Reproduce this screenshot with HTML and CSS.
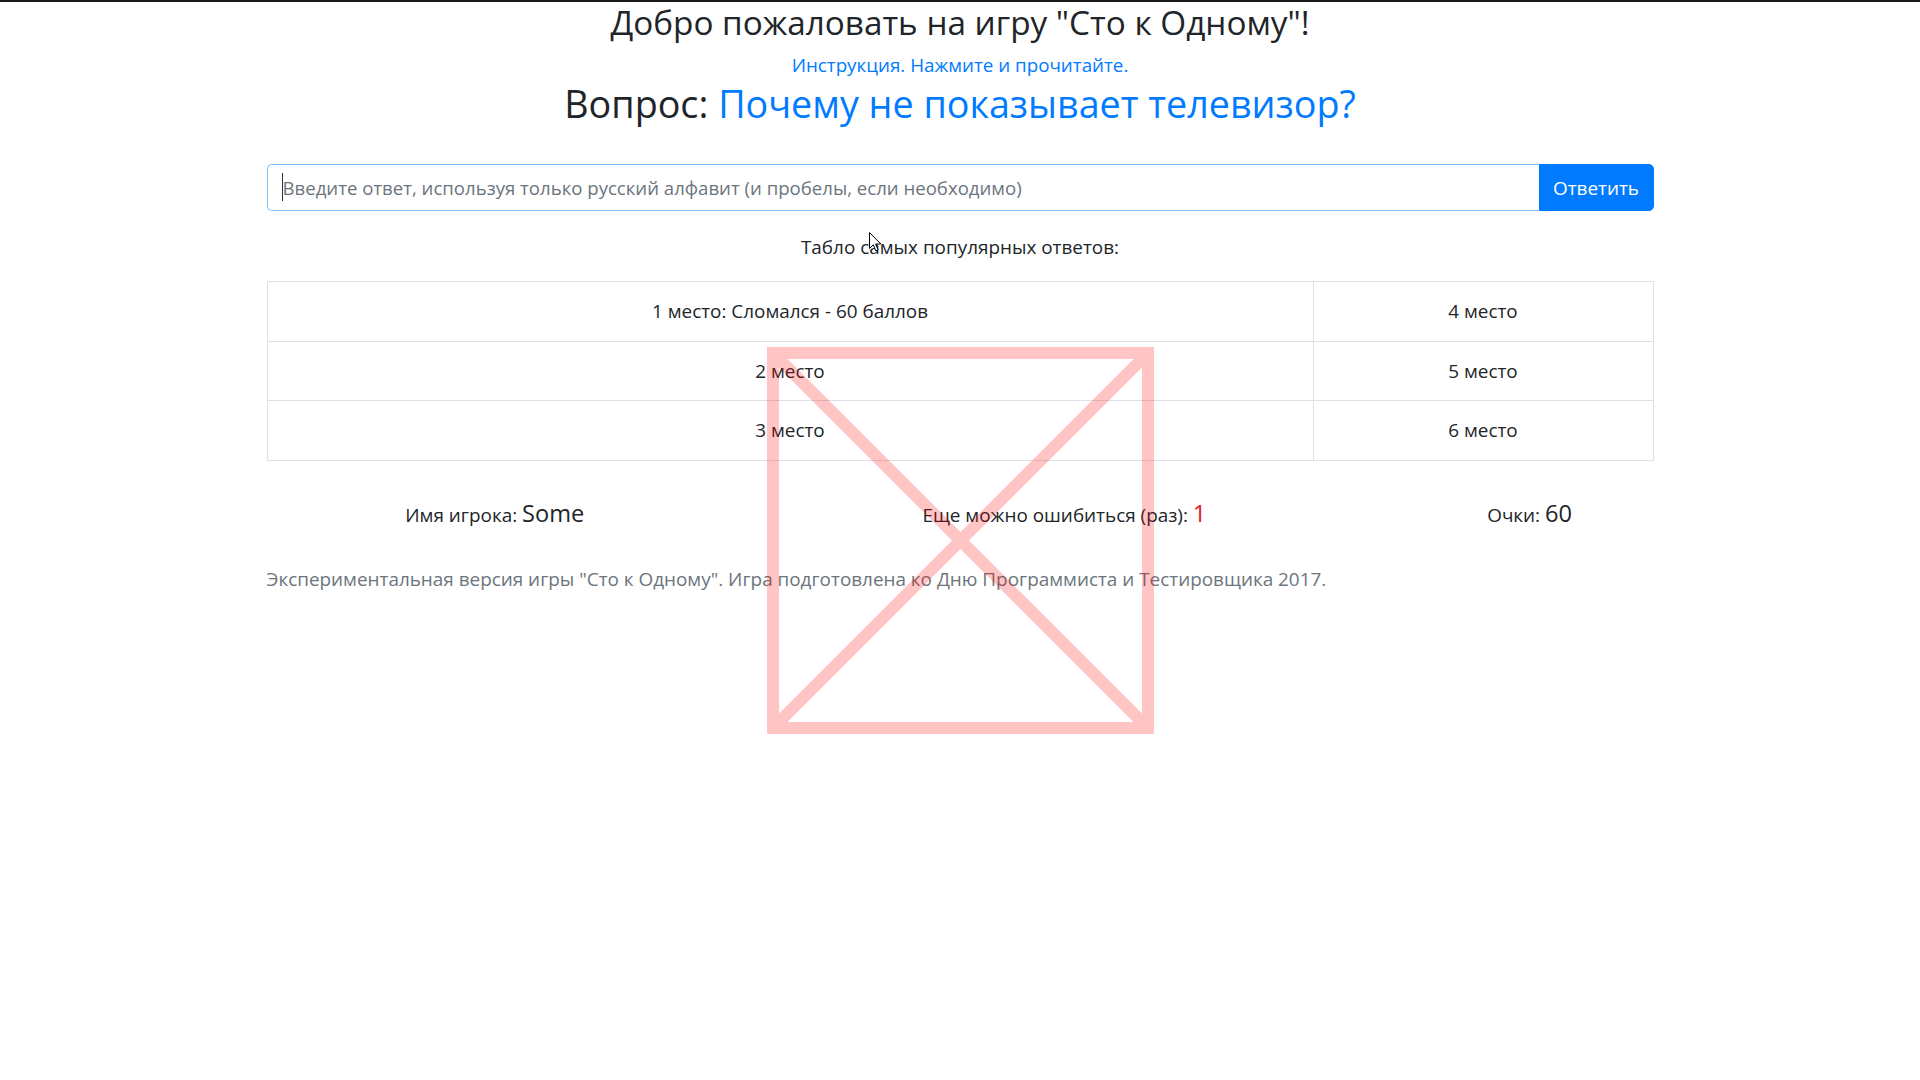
FILE: index.html
```html
<!DOCTYPE html>
<html lang="ru">
<head>
<meta charset="utf-8">
<title>Сто к Одному</title>
<link rel="stylesheet" href="styles.css">
</head>
<body>
<div class="container">
  <h1 class="title">Добро пожаловать на игру "Сто к Одному"!</h1>
  <div class="instr"><a href="#" class="link">Инструкция. Нажмите и прочитайте.</a></div>
  <h2 class="question">Вопрос: <span class="q-text">Почему не показывает телевизор?</span></h2>
  <form class="answer-form">
    <div class="field">
      <input class="answer-input" type="text" placeholder="Введите ответ, используя только русский алфавит (и пробелы, если необходимо)">
      <span class="caret"></span>
    </div>
    <button class="answer-btn" type="button">Ответить</button>
  </form>
  <p class="board-title">Табло самых популярных ответов:<svg class="pointer" width="13" height="21" viewBox="0 0 13 21"><path d="M0.5 0.5 L0.5 16.5 L4.3 12.8 L6.8 18.8 L9.1 17.8 L6.6 12 L11.8 12 Z" fill="#fff" stroke="#000" stroke-width="1" stroke-linejoin="round"/></svg></p>
  <table class="board">
    <colgroup><col class="c1"><col class="c2"></colgroup>
    <tr><td>1 место: Сломался - 60 баллов</td><td>4 место</td></tr>
    <tr><td>2 место</td><td>5 место</td></tr>
    <tr><td>3 место</td><td>6 место</td></tr>
  </table>
  <div class="stats">
    <div class="stat">Имя игрока: <span class="big">Some</span></div>
    <div class="stat">Еще можно ошибиться (раз): <span class="big danger">1</span></div>
    <div class="stat">Очки: <span class="big">60</span></div>
  </div>
  <p class="footer">Экспериментальная версия игры "Сто к Одному". Игра подготовлена ко Дню Программиста и Тестировщика 2017.</p>
</div>
<div class="topline"></div>
<svg class="xmark" width="387" height="387" viewBox="0 0 387 387">
  <g opacity="0.23" stroke="#ff0000" stroke-width="12" fill="none">
    <path d="M6 6 H381 V381 H6 Z M12 12 L375 375 M375 12 L12 375"/>
  </g>
</svg>
</body>
</html>
```
FILE: styles.css
```css
* { box-sizing: border-box; }
html, body { margin: 0; padding: 0; background: #fff; }
body {
  font-family: "Open Sans", "Noto Sans", sans-serif;
  font-size: 18.9px;
  line-height: 30px;
  color: #212529;
  position: relative;
  min-height: 1080px;
}
.topline { position: absolute; top: 0; left: 0; right: 0; height: 2px; background: #1a1a1a; }
.container { width: 1387px; margin: 0 auto; }
.title {
  margin: 0;
  font-size: 33.3px;
  line-height: 44px;
  font-weight: 400;
  text-align: center;
}
.instr { margin-top: 9px; text-align: center; font-size: 18.8px; line-height: 24px; }
.link { color: #007bff; text-decoration: none; }
.question {
  margin: 1px 0 0;
  font-size: 37.7px;
  line-height: 51.5px;
  font-weight: 400;
  text-align: center;
}
.q-text { color: #007bff; }
.answer-form { display: flex; margin-top: 34.5px; height: 47px; }
.field { position: relative; flex: 1; display: flex; }
.answer-input {
  flex: 1;
  height: 47px;
  border: 1px solid #80bdff;
  border-right: none;
  border-radius: 5px 0 0 5px;
  padding: 0 15px;
  font-family: inherit;
  font-size: 18.6px;
  color: #495057;
  outline: none;
}
.answer-input::placeholder { color: #6c757d; opacity: 1; }
.caret {
  position: absolute;
  left: 15px;
  top: 9px;
  width: 1.5px;
  height: 28px;
  background: #333;
}
.answer-btn {
  flex: 0 0 115px;
  height: 47px;
  border: 1px solid #007bff;
  background: #007bff;
  color: #fff;
  border-radius: 0 5px 5px 0;
  font-family: inherit;
  font-size: 18.9px;
  padding: 0;
}
.board-title { margin: 21px 0 0; text-align: center; position: relative; }
.pointer { position: absolute; left: 602px; top: 0; }
.board {
  margin-top: 19px;
  width: 100%;
  border-collapse: collapse;
  table-layout: fixed;
}
.c1 { width: 1046px; }
.board td {
  border: 1px solid #dee2e6;
  padding: 15px;
  line-height: 28.5px;
  text-align: center;
}
.stats {
  margin-top: 37px;
  display: grid;
  grid-template-columns: 456.5fr 682.6fr 247.8fr;
}
.stat { text-align: center; }
.big { font-size: 23.6px; line-height: 30px; }
.danger { color: #e0202c; }
.footer { margin: 34px 0 0; color: #6c757d; }
.xmark { position: absolute; left: 767px; top: 347px; }
```
